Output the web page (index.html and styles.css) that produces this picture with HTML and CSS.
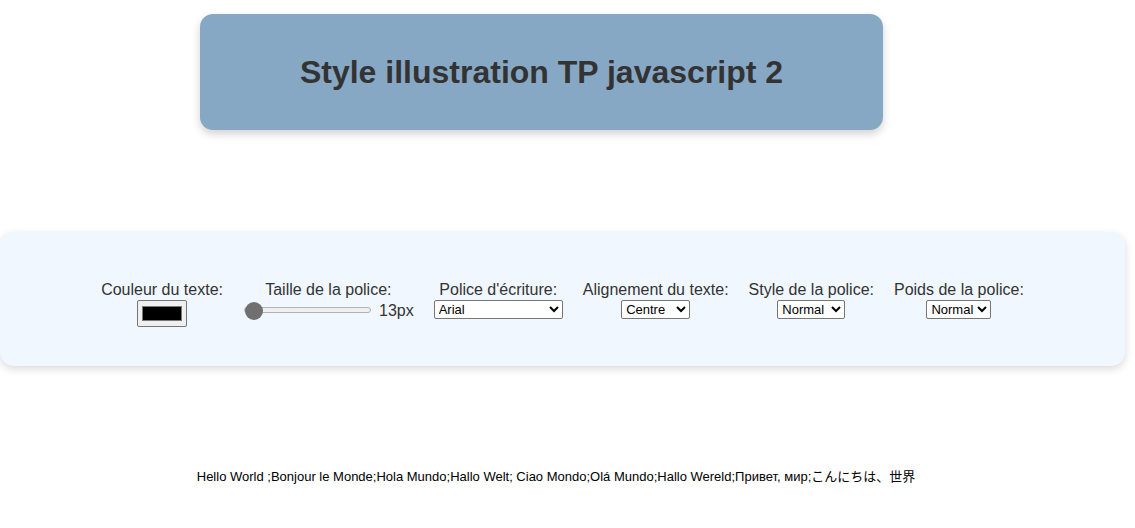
FILE: index.html
```html
<!DOCTYPE html>
<html lang="fr">
<head>
<meta charset="utf-8">
<title>Style illustration TP javascript 2</title>
<link rel="stylesheet" href="styles.css">
</head>
<body>
<header class="banner">
  <h1 class="banner-title">Style illustration TP javascript 2</h1>
</header>

<section class="panel">
  <div class="control">
    <label class="control-label" for="couleur">Couleur du texte:</label>
    <input class="color-input" type="color" id="couleur" value="#000000">
  </div>
  <div class="control">
    <label class="control-label" for="taille">Taille de la police:</label>
    <div class="range-row">
      <input class="range-input" type="range" id="taille" min="13" max="40" value="13">
      <span class="range-value">13px</span>
    </div>
  </div>
  <div class="control">
    <label class="control-label" for="police">Police d'écriture:</label>
    <select class="select select-police" id="police">
      <option>Arial</option>
      <option>Times New Roman</option>
      <option>Courier New</option>
      <option>Verdana</option>
    </select>
  </div>
  <div class="control">
    <label class="control-label" for="align">Alignement du texte:</label>
    <select class="select select-align" id="align">
      <option>Centre</option>
      <option>Gauche</option>
      <option>Droite</option>
    </select>
  </div>
  <div class="control">
    <label class="control-label" for="style">Style de la police:</label>
    <select class="select select-style" id="style">
      <option>Normal</option>
      <option>Italique</option>
      <option>Oblique</option>
    </select>
  </div>
  <div class="control">
    <label class="control-label" for="poids">Poids de la police:</label>
    <select class="select select-weight" id="poids">
      <option>Normal</option>
      <option>Gras</option>
    </select>
  </div>
</section>

<p class="sample">Hello World ;Bonjour le Monde;Hola Mundo;Hallo Welt; Ciao Mondo;Olá Mundo;Hallo Wereld;Привет, мир;こんにちは、世界</p>
</body>
</html>
```

FILE: styles.css
```css
html, body {
  margin: 0;
  padding: 0;
  background: #ffffff;
}

body {
  font-family: "Liberation Sans", Arial, "Noto Sans CJK JP", sans-serif;
  color: #333333;
}

.banner {
  box-sizing: border-box;
  width: 683px;
  height: 116px;
  margin: 14px 0 0 200px;
  background: #87a8c5;
  border-radius: 13px;
  box-shadow: 0 4px 8px rgba(0, 0, 0, 0.18);
  display: flex;
  align-items: center;
  justify-content: center;
}

.banner-title {
  margin: 0;
  font-size: 32px;
  font-weight: bold;
  color: #333333;
}

.panel {
  box-sizing: border-box;
  width: 1125px;
  height: 134px;
  margin-top: 102px;
  padding-top: 49px;
  background: #f0f7ff;
  border-radius: 14px;
  box-shadow: 0 3px 8px rgba(0, 0, 0, 0.15);
  display: flex;
  justify-content: center;
  align-items: flex-start;
  gap: 20px;
}

.control {
  display: flex;
  flex-direction: column;
  align-items: center;
}

.control-label {
  font-size: 16px;
  line-height: 18px;
  color: #333333;
}

.color-input {
  box-sizing: border-box;
  width: 50px;
  height: 27px;
  margin: 1px 0 0;
  padding: 1px 2px;
  border: 1px solid #767676;
  border-radius: 2px;
  background: #efefef;
}

.range-row {
  display: flex;
  align-items: center;
  height: 20px;
}

.range-input {
  -webkit-appearance: none;
  appearance: none;
  width: 127px;
  height: 18px;
  margin: 1px 8px 0 1px;
  background: transparent;
}

.range-input::-webkit-slider-runnable-track {
  height: 6px;
  background: #efefef;
  border: 1px solid #b2b2b2;
  border-radius: 4px;
}

.range-input::-webkit-slider-thumb {
  -webkit-appearance: none;
  appearance: none;
  width: 18px;
  height: 18px;
  margin-top: -6px;
  border-radius: 50%;
  background: #707070;
  border: none;
}

.range-value {
  font-size: 16px;
  color: #333333;
  margin-top: 4px;
}

.select {
  box-sizing: border-box;
  height: 19px;
  margin-top: 1px;
  font-family: "Liberation Sans", Arial, sans-serif;
  font-size: 13px;
  color: #000000;
  background: #ffffff;
  border: 1px solid #767676;
  border-radius: 2px;
}

.select-police { width: 129px; }
.select-align { width: 69px; }
.select-style { width: 68px; }
.select-weight { width: 65px; }

.sample {
  margin: 100px 0 0;
  padding-right: 23px;
  text-align: center;
  font-size: 13px;
  color: #000000;
  font-family: "Liberation Sans", Arial, "Noto Sans CJK JP", sans-serif;
}
```
